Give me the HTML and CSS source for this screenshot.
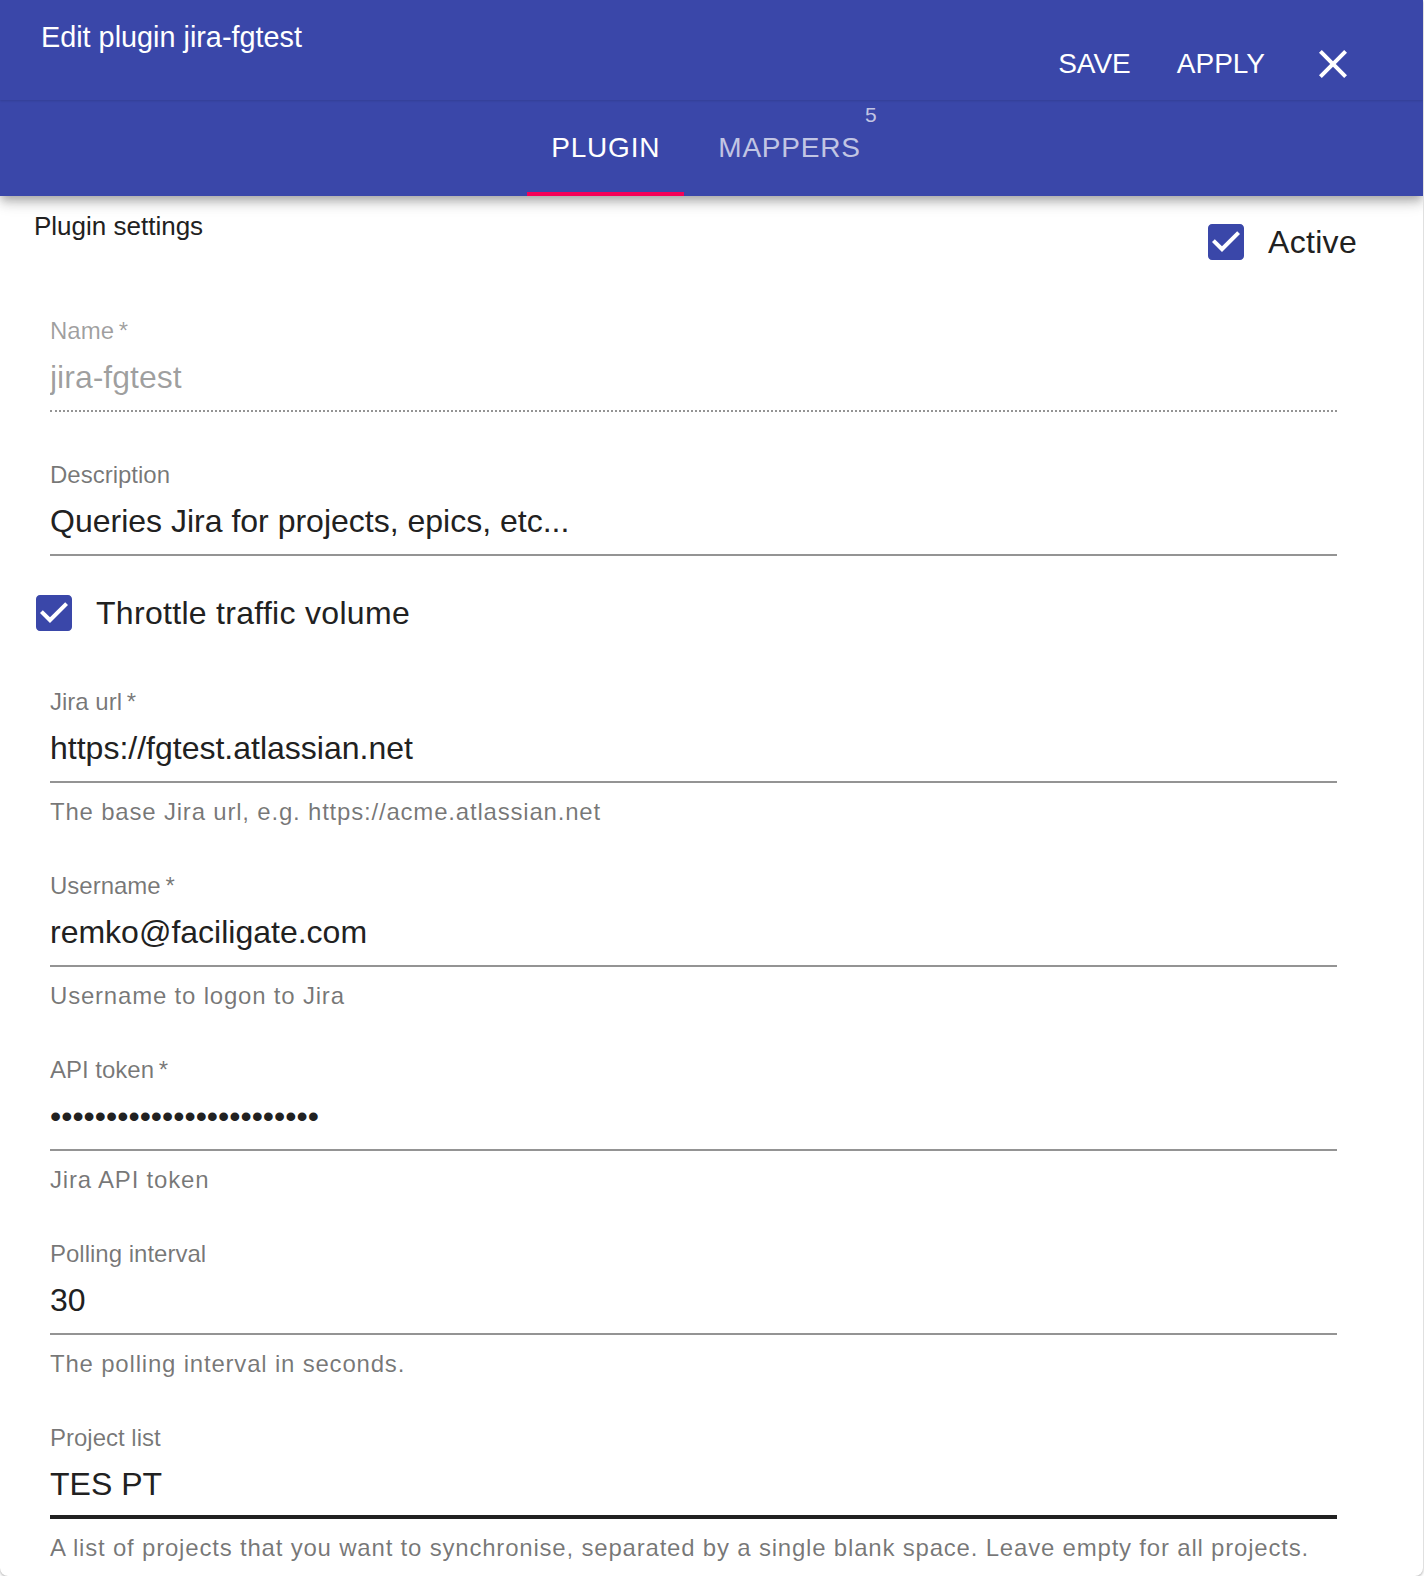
FILE: index.html
```html
<!DOCTYPE html>
<html lang="en">
<head>
  <meta charset="UTF-8" />
  <meta name="viewport" content="width=device-width, initial-scale=1.0" />
  <title>Edit plugin jira-fgtest</title>
  <link rel="stylesheet" href="styles.css">
</head>
<body>
  <div class="dialog">
    <header class="appbar">
      <div class="titlebar">
        <h1 class="title">Edit plugin jira-fgtest</h1>
        <div class="actions">
          <button class="btn">Save</button>
          <button class="btn">Apply</button>
          <button class="icon-btn" aria-label="Close">
            <svg viewBox="0 0 24 24"><path d="M19 6.41L17.59 5 12 10.59 6.41 5 5 6.41 10.59 12 5 17.59 6.41 19 12 13.41 17.59 19 19 17.59 13.41 12z"/></svg>
          </button>
        </div>
      </div>
      <nav class="tabs">
        <div class="tab tab-active">Plugin</div>
        <div class="tab"><span class="tab-label">Mappers<span class="badge">5</span></span></div>
      </nav>
    </header>

    <main class="content">
      <div class="settings-head">
        <span class="section-title">Plugin settings</span>
        <label class="check">
          <svg viewBox="0 0 24 24"><path d="M19 3H5c-1.11 0-2 .9-2 2v14c0 1.1.89 2 2 2h14c1.11 0 2-.9 2-2V5c0-1.1-.89-2-2-2zm-9 14l-5-5 1.41-1.41L10 14.17l7.59-7.59L19 8l-9 9z"/></svg>
          <span class="check-label">Active</span>
        </label>
      </div>

      <div class="fields">
        <div class="field field-disabled field-name">
          <label class="field-label">Name<span class="req">&thinsp;*</span></label>
          <input class="field-input" type="text" value="jira-fgtest" disabled>
        </div>

        <div class="field field-desc">
          <label class="field-label">Description</label>
          <input class="field-input" type="text" value="Queries Jira for projects, epics, etc...">
        </div>
      </div>

      <label class="check check-row">
        <svg viewBox="0 0 24 24"><path d="M19 3H5c-1.11 0-2 .9-2 2v14c0 1.1.89 2 2 2h14c1.11 0 2-.9 2-2V5c0-1.1-.89-2-2-2zm-9 14l-5-5 1.41-1.41L10 14.17l7.59-7.59L19 8l-9 9z"/></svg>
        <span class="check-label">Throttle traffic volume</span>
      </label>

      <div class="fields">
        <div class="field field-first">
          <label class="field-label">Jira url<span class="req">&thinsp;*</span></label>
          <input class="field-input" type="text" value="https://fgtest.atlassian.net">
          <p class="helper">The base Jira url, e.g. https://acme.atlassian.net</p>
        </div>

        <div class="field">
          <label class="field-label">Username<span class="req">&thinsp;*</span></label>
          <input class="field-input" type="text" value="remko@faciligate.com">
          <p class="helper">Username to logon to Jira</p>
        </div>

        <div class="field">
          <label class="field-label">API token<span class="req">&thinsp;*</span></label>
          <input class="field-input" type="password" value="xxxxxxxxxxxxxxxxxxxxxxxx">
          <p class="helper">Jira API token</p>
        </div>

        <div class="field">
          <label class="field-label">Polling interval</label>
          <input class="field-input" type="text" value="30">
          <p class="helper">The polling interval in seconds.</p>
        </div>

        <div class="field field-focused">
          <label class="field-label">Project list</label>
          <input class="field-input" type="text" value="TES PT">
          <p class="helper">A list of projects that you want to synchronise, separated by a single blank space. Leave empty for all projects.</p>
        </div>
      </div>
    </main>
  </div>
</body>
</html>
```

FILE: styles.css
```css
/* Base */
* {
  box-sizing: border-box;
  margin: 0;
  padding: 0;
}
body {
  font-family: 'Liberation Sans', Arial, Helvetica, sans-serif;
  background: #fff;
  color: #212121;
}
button {
  font-family: inherit;
  border: none;
  background: none;
  cursor: pointer;
}

/* Dialog */
.dialog {
  width: 1423px;
  height: 1576px;
  background: #fff;
  border-radius: 0 0 8px 8px;
  box-shadow: 0 1px 3px rgba(0,0,0,0.35);
  overflow: hidden;
}

/* App bar */
.appbar {
  position: relative;
  z-index: 2;
  background: #3a47a9;
  color: #fff;
  box-shadow: 0 4px 8px -2px rgba(0,0,0,0.2), 0 8px 10px 0 rgba(0,0,0,0.14), 0 2px 20px 0 rgba(0,0,0,0.12);
}
.titlebar {
  position: relative;
  z-index: 1;
  display: flex;
  align-items: flex-start;
  height: 100px;
  padding: 21px 66px 0 41px;
  box-shadow: 0 1px 2px rgba(0,0,0,0.12);
}
.title {
  font-size: 28.8px;
  font-weight: normal;
  line-height: 32px;
}
.actions {
  display: flex;
  align-items: center;
  margin-left: auto;
  margin-top: 19px;
}
.btn {
  color: #fff;
  font-size: 28px;
  line-height: 48px;
  padding: 0 16px;
  text-transform: uppercase;
}
.btn + .btn {
  margin-left: 14px;
}
.icon-btn {
  width: 48px;
  height: 48px;
  margin-left: 28px;
}
.icon-btn svg {
  display: block;
  width: 48px;
  height: 48px;
  fill: #fff;
}

/* Tabs */
.tabs {
  display: flex;
  justify-content: center;
  height: 96px;
}
.tab {
  position: relative;
  display: flex;
  align-items: center;
  padding: 0 24px;
  font-size: 28px;
  letter-spacing: 0.8px;
  text-transform: uppercase;
  color: rgba(255,255,255,0.7);
}
.tab-active {
  color: #fff;
}
.tab-active::after {
  content: '';
  position: absolute;
  left: 0;
  right: 0;
  bottom: 0;
  height: 4px;
  background: #f50057;
}
.tab-label {
  position: relative;
  line-height: 32px;
  padding: 0 11px 0 10px;
}
.badge {
  position: absolute;
  right: -5px;
  top: -29px;
  font-size: 21px;
  line-height: 24px;
  letter-spacing: 0;
}

/* Content */
.content {
  padding-bottom: 13px;
}
.settings-head {
  display: flex;
  justify-content: space-between;
  align-items: flex-start;
  padding: 15px 66px 0 34px;
  height: 70px;
}
.section-title {
  font-size: 26px;
  line-height: 30px;
  color: #212121;
}
.check {
  display: flex;
  align-items: center;
  font-size: 32px;
  letter-spacing: 0.3px;
  color: #212121;
}
.settings-head .check {
  margin-top: 7px;
}
.check svg {
  width: 48px;
  height: 48px;
  fill: #3a47a9;
  margin-right: 18px;
}
.check-row {
  margin: 33px 0 0 30px;
}

/* Text fields */
.fields {
  margin: 0 86px 0 50px;
}
.field {
  margin-top: 44px;
}
.field-name {
  margin-top: 50px;
}
.field-desc {
  margin-top: 48px;
}
.field-first {
  margin-top: 50px;
}
.field-label {
  display: block;
  font-size: 24px;
  line-height: 30px;
  color: rgba(0,0,0,0.54);
}
.field-input {
  display: block;
  width: 100%;
  height: 66px;
  padding: 12px 0 14px;
  border: none;
  border-bottom: 2px solid rgba(0,0,0,0.42);
  background: transparent;
  font-family: inherit;
  font-size: 32px;
  line-height: 38px;
  color: #212121;
  outline: none;
}
.field-disabled .field-label {
  color: rgba(0,0,0,0.38);
}
.field-disabled .field-input {
  color: rgba(0,0,0,0.38);
  -webkit-text-fill-color: rgba(0,0,0,0.38);
  border-bottom: 2px dotted rgba(0,0,0,0.42);
}
.field-focused .field-input {
  border-bottom: 4px solid #212121;
  padding-bottom: 12px;
}
.helper {
  margin-top: 14px;
  font-size: 24px;
  line-height: 30px;
  letter-spacing: 0.8px;
  color: rgba(0,0,0,0.54);
}
```
